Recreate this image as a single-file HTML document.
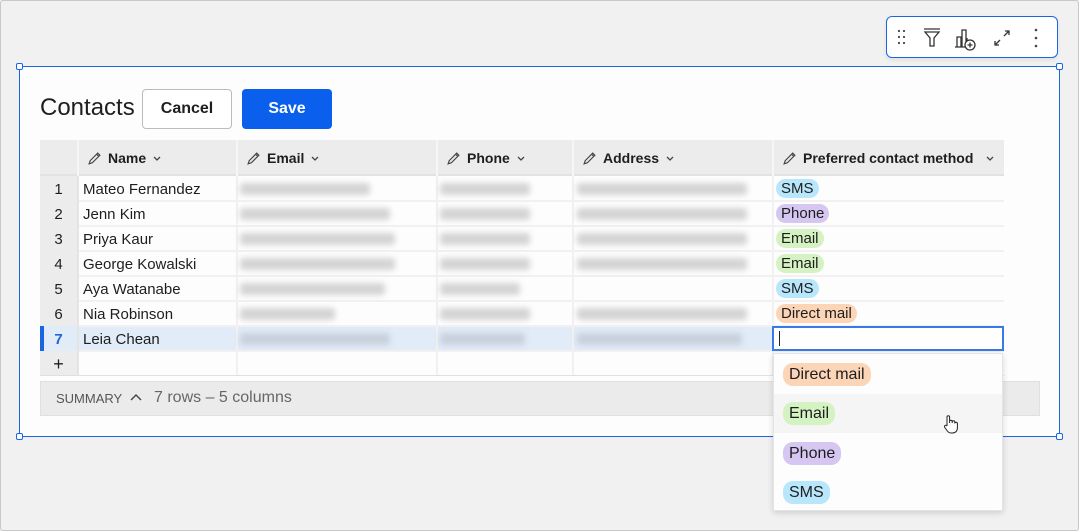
<!DOCTYPE html>
<html><head><meta charset="utf-8"><style>
*{box-sizing:border-box;margin:0;padding:0}
body{width:1079px;height:531px;background:#f1f1f1;font-family:"Liberation Sans",sans-serif;position:relative;overflow:hidden;color:#1e1e1e}
.frame{position:absolute;left:0;top:0;width:1079px;height:531px;border:1px solid #c8c8c8;border-radius:3px}
.abs{position:absolute}
.card{left:19px;top:66px;width:1041px;height:371px;background:#fdfdfd;border:1px solid #1a66e0}
.h{width:7px;height:7px;border:1px solid #1a66e0;background:#fff;border-radius:2px;position:absolute}
.tb{left:886px;top:16px;width:172px;height:42px;border:1px solid #1a66e0;border-radius:6px;background:#fff;box-shadow:0 2px 4px rgba(0,0,0,.08)}
.btn{top:89px;height:40px;border-radius:4px;font-weight:bold;font-size:16px;display:flex;align-items:center;justify-content:center}
.hdr{top:140px;height:36px;background:#ececec;border-bottom:2px solid #e2e2e2}
.hc{top:140px;height:36px;font-size:14px;font-weight:bold;display:flex;align-items:center;gap:6px;border-left:2px solid #f6f6f6}
.num{left:40px;width:37px;text-align:center;font-size:15px}
.cell{font-size:15px}
.blur{position:absolute;height:12px;background:#d4d4d4;filter:blur(3px);border-radius:3px}
.pill{display:inline-block;padding:0 5px;border-radius:10px;font-size:15px;line-height:19px}
.sms{background:#b8e6fb}.ph{background:#d5c6f2}.em{background:#d4f2c2}.dm{background:#fcd4b6}
.vl{position:absolute;top:176px;height:200px;width:2px;background:#f1f1f1}
.hl{position:absolute;left:77px;width:927px;height:2px;background:#f1f1f1}
</style></head><body>
<div class="frame"></div>
<div class="abs card"></div>
<div class="h" style="left:16px;top:63px"></div><div class="h" style="left:1056px;top:63px"></div>
<div class="h" style="left:16px;top:433px"></div><div class="h" style="left:1056px;top:433px"></div>
<div class="abs tb">
<svg width="172" height="42" viewBox="0 0 172 42" fill="none" stroke="#333" stroke-width="1.3">
<g fill="#444" stroke="none"><circle cx="12" cy="14" r="1.1"/><circle cx="17" cy="14" r="1.1"/><circle cx="12" cy="20" r="1.1"/><circle cx="17" cy="20" r="1.1"/><circle cx="12" cy="26" r="1.1"/><circle cx="17" cy="26" r="1.1"/></g>
<path d="M37 12h16M38 15h14l-5 6v8h-4v-8z"/>
<path d="M68 30h20M70 30v-10h4v10M75 30v-17h4v17M80 30v-9"/>
<circle cx="83" cy="28" r="5" fill="#fff"/><path d="M83 25.5v5M80.5 28h5"/>
<path d="M108 28l5-5M108 24v4h4M122 14l-5 5M118 14h4v4"/>
<g fill="#444" stroke="none"><circle cx="149" cy="13" r="1.3"/><circle cx="149" cy="21" r="1.3"/><circle cx="149" cy="29" r="1.3"/></g>
</svg></div>
<div class="abs" style="left:40px;top:94px;font-size:24px">Contacts</div>
<div class="abs btn" style="left:142px;width:90px;border:1px solid #bbb;background:#fff">Cancel</div>
<div class="abs btn" style="left:242px;width:90px;background:#0a5fec;color:#fff">Save</div>
<div class="abs hdr" style="left:40px;width:964px"></div>
<svg width="0" height="0"><defs><symbol id="pen" viewBox="0 0 14 14"><path d="M2 12l1-3 7-7 2 2-7 7zM9 3l2 2" fill="none" stroke="#444" stroke-width="1.1"/></symbol><symbol id="chev" viewBox="0 0 10 10"><path d="M2 4l3 3 3-3" fill="none" stroke="#444" stroke-width="1.3"/></symbol></defs></svg>
<div class="abs hc" style="left:77px;width:159px;padding-left:8px"><svg width="15" height="15"><use href="#pen"/></svg>Name <svg width="10" height="10"><use href="#chev"/></svg></div>
<div class="abs hc" style="left:236px;width:200px;padding-left:8px"><svg width="15" height="15"><use href="#pen"/></svg>Email <svg width="10" height="10"><use href="#chev"/></svg></div>
<div class="abs hc" style="left:436px;width:136px;padding-left:8px"><svg width="15" height="15"><use href="#pen"/></svg>Phone <svg width="10" height="10"><use href="#chev"/></svg></div>
<div class="abs hc" style="left:572px;width:200px;padding-left:8px"><svg width="15" height="15"><use href="#pen"/></svg>Address <svg width="10" height="10"><use href="#chev"/></svg></div>
<div class="abs hc" style="left:772px;width:232px;padding-left:8px"><svg width="15" height="15"><use href="#pen"/></svg>Preferred contact method <svg width="10" height="10" style="margin-left:6px"><use href="#chev"/></svg></div>
<div class="abs" style="left:40px;top:326px;width:732px;height:25px;background:#e2ebf8"></div>
<div class="hl" style="top:200px"></div><div class="hl" style="top:225px"></div><div class="hl" style="top:250px"></div><div class="hl" style="top:275px"></div><div class="hl" style="top:300px"></div><div class="hl" style="top:325px"></div><div class="hl" style="top:350px"></div>
<div class="vl" style="left:77px;background:#e4e4e4"></div><div class="vl" style="left:236px"></div><div class="vl" style="left:436px"></div><div class="vl" style="left:572px"></div><div class="vl" style="left:772px"></div>
<div class="abs" style="left:40px;top:176px;width:37px;height:200px;background:#ececec"></div>
<div class="abs" style="left:40px;top:326px;width:37px;height:25px;background:#e2ebf8"></div>
<div class="abs" style="left:40px;top:326px;width:4px;height:25px;background:#1a66e0"></div>
<div class="abs" style="left:40px;top:375px;width:964px;height:1px;background:#e0e0e0"></div>
<div class="abs num" style="top:181px">1</div><div class="abs cell" style="left:83px;top:181px">Mateo Fernandez</div>
<div class="abs num" style="top:206px">2</div><div class="abs cell" style="left:83px;top:206px">Jenn Kim</div>
<div class="abs num" style="top:231px">3</div><div class="abs cell" style="left:83px;top:231px">Priya Kaur</div>
<div class="abs num" style="top:256px">4</div><div class="abs cell" style="left:83px;top:256px">George Kowalski</div>
<div class="abs num" style="top:281px">5</div><div class="abs cell" style="left:83px;top:281px">Aya Watanabe</div>
<div class="abs num" style="top:306px">6</div><div class="abs cell" style="left:83px;top:306px">Nia Robinson</div>
<div class="abs num" style="top:331px;color:#1a66e0;font-weight:bold">7</div><div class="abs cell" style="left:83px;top:331px">Leia Chean</div>
<div class="abs num" style="top:355px;font-size:18px;line-height:18px">+</div>
<div class="blur" style="left:240px;top:183px;width:130px"></div><div class="blur" style="left:440px;top:183px;width:90px"></div><div class="blur" style="left:577px;top:183px;width:170px"></div>
<div class="blur" style="left:240px;top:208px;width:150px"></div><div class="blur" style="left:440px;top:208px;width:90px"></div><div class="blur" style="left:577px;top:208px;width:170px"></div>
<div class="blur" style="left:240px;top:233px;width:155px"></div><div class="blur" style="left:440px;top:233px;width:90px"></div><div class="blur" style="left:577px;top:233px;width:170px"></div>
<div class="blur" style="left:240px;top:258px;width:155px"></div><div class="blur" style="left:440px;top:258px;width:90px"></div><div class="blur" style="left:577px;top:258px;width:170px"></div>
<div class="blur" style="left:240px;top:283px;width:145px"></div><div class="blur" style="left:440px;top:283px;width:80px"></div>
<div class="blur" style="left:240px;top:308px;width:95px"></div><div class="blur" style="left:440px;top:308px;width:90px"></div><div class="blur" style="left:577px;top:308px;width:170px"></div>
<div class="blur" style="left:240px;top:333px;width:150px;background:#c8d0dc"></div><div class="blur" style="left:440px;top:333px;width:85px;background:#c8d0dc"></div><div class="blur" style="left:577px;top:333px;width:165px;background:#c8d0dc"></div>
<div class="abs" style="left:776px;top:179px"><span class="pill sms">SMS</span></div>
<div class="abs" style="left:776px;top:204px"><span class="pill ph">Phone</span></div>
<div class="abs" style="left:776px;top:229px"><span class="pill em">Email</span></div>
<div class="abs" style="left:776px;top:254px"><span class="pill em">Email</span></div>
<div class="abs" style="left:776px;top:279px"><span class="pill sms">SMS</span></div>
<div class="abs" style="left:776px;top:304px"><span class="pill dm">Direct mail</span></div>
<div class="abs" style="left:772px;top:326px;width:232px;height:25px;border:2px solid #3a7ae8;background:#fff"><div style="position:absolute;left:5px;top:3px;width:1px;height:15px;background:#222"></div></div>
<div class="abs" style="left:40px;top:381px;width:1000px;height:35px;background:#ebebeb;border:1px solid #e0e0e0"></div>
<div class="abs" style="left:56px;top:391px;font-size:13px;color:#555">SUMMARY</div>
<svg class="abs" style="left:129px;top:392px" width="14" height="10"><path d="M2 8l5-5 5 5" fill="none" stroke="#444" stroke-width="1.4"/></svg>
<div class="abs" style="left:154px;top:389px;font-size:16px;color:#666">7 rows – 5 columns</div>
<div class="abs" style="left:773px;top:353px;width:230px;height:158px;background:#fdfdfd;border:1px solid #e4e4e4;box-shadow:0 2px 6px rgba(0,0,0,.15)">
<div style="position:absolute;left:0;top:40px;width:228px;height:39px;background:#f5f5f5"></div>
<div style="position:absolute;left:9px;top:9px"><span class="pill dm" style="font-size:16px;padding:2px 6px">Direct mail</span></div>
<div style="position:absolute;left:9px;top:48px"><span class="pill em" style="font-size:16px;padding:2px 6px">Email</span></div>
<div style="position:absolute;left:9px;top:88px"><span class="pill ph" style="font-size:16px;padding:2px 6px">Phone</span></div>
<div style="position:absolute;left:9px;top:127px"><span class="pill sms" style="font-size:16px;padding:2px 6px">SMS</span></div>
<svg style="position:absolute;left:168px;top:60px" width="18" height="20" viewBox="0 0 18 20"><path d="M5 12V3a1.3 1.3 0 0 1 2.6 0v6M7.6 9V7.5a1.3 1.3 0 0 1 2.6 0V9M10.2 9V8a1.3 1.3 0 0 1 2.6 0v1.5M12.8 9.5a1.3 1.3 0 0 1 2.6 0V14c0 3-2 5-5 5H9c-2 0-3-1-4-2.5L2.5 13a1.3 1.3 0 0 1 2-1.5L5 12" fill="#fff" stroke="#222" stroke-width="1"/></svg>
</div>
</body></html>
